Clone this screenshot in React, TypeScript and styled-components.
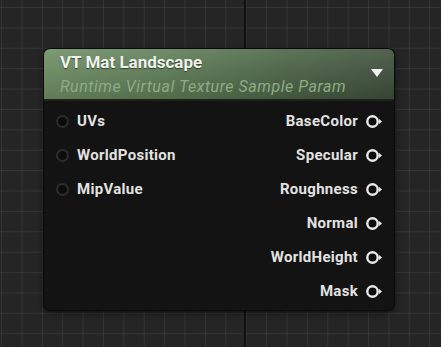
import styled, { createGlobalStyle } from 'styled-components'

const Global = createGlobalStyle`
  html, body {
    margin: 0;
    padding: 0;
    background: #252525;
  }
  #root {
    font-family: Roboto, "Liberation Sans", sans-serif;
  }
`

const Canvas = styled.div`
  position: relative;
  width: 441px;
  height: 347px;
  overflow: hidden;
  box-sizing: border-box;
  padding: 49px 0 0 44px;
  background-color: #252525;
  background-image:
    linear-gradient(to right, transparent 244px, #101010 244px, #101010 246px, transparent 246px),
    linear-gradient(to right, rgba(255, 255, 255, 0.07) 1px, transparent 1px),
    linear-gradient(to bottom, rgba(255, 255, 255, 0.07) 1px, transparent 1px);
  background-size: 441px 347px, 20.4px 20.4px, 20.4px 20.4px;
  background-position: 0 0, 1px 0, 0 7px;
`

const Node = styled.div`
  width: 350px;
  height: 261px;
  border-radius: 6px;
  background: #131313;
  box-shadow: 0 0 0 1px #0a0a0a, 0 2px 6px rgba(0, 0, 0, 0.7);
  overflow: hidden;
  display: flex;
  flex-direction: column;
`

const Header = styled.div`
  position: relative;
  height: 52px;
  box-sizing: border-box;
  padding: 3px 16px 0 16px;
  background:
    linear-gradient(to bottom, rgba(255, 255, 255, 0.1), rgba(0, 0, 0, 0.14)),
    linear-gradient(to right, #6f9066 0%, #5f7e57 35%, #4b6446 70%, #3f503c 100%);
  border-bottom: 2px solid #1c2319;
  display: flex;
  flex-direction: column;
`

const Title = styled.div`
  font-size: 17px;
  font-weight: 700;
  color: #eef2ec;
  line-height: 21px;
  text-shadow: 0 1px 1px rgba(0, 0, 0, 0.5);
`

const Subtitle = styled.div`
  margin-top: 4px;
  font-size: 16px;
  font-style: italic;
  color: #8dac86;
  line-height: 19px;
  letter-spacing: 0.55px;
`

const Caret = styled.svg`
  position: absolute;
  right: 10px;
  top: 19px;
`

const Body = styled.div`
  flex: 1;
  display: grid;
  grid-template-columns: 1fr 1fr;
  padding: 3px 10px 0 10px;
`

const Column = styled.div<{ $right?: boolean }>`
  display: flex;
  flex-direction: column;
  align-items: ${(p) => (p.$right ? 'flex-end' : 'flex-start')};
`

const Pin = styled.div`
  height: 34px;
  display: flex;
  align-items: center;
  gap: 7px;
  font-size: 15px;
  font-weight: 700;
  color: #e2e2e2;
  letter-spacing: 0.3px;
`

const InDot = styled.span`
  width: 9px;
  height: 9px;
  border-radius: 50%;
  border: 2px solid #2c2c2c;
  background: #0c0c0c;
  margin: 0 1px 0 2px;
`

const OutPin = () => (
  <svg width="19" height="15" viewBox="0 0 19 15">
    <circle cx="7.5" cy="7.5" r="5.2" fill="#0c0c0c" stroke="#e8e8e8" strokeWidth="2.4" />
    <path d="M13.8 4.8 L17 7.5 L13.8 10.2 Z" fill="#e8e8e8" />
  </svg>
)

const inputs = ['UVs', 'WorldPosition', 'MipValue']
const outputs = ['BaseColor', 'Specular', 'Roughness', 'Normal', 'WorldHeight', 'Mask']

export default function App() {
  return (
    <>
      <Global />
      <Canvas>
        <Node>
          <Header>
            <Title>VT Mat Landscape</Title>
            <Subtitle>Runtime Virtual Texture Sample Param</Subtitle>
            <Caret width="14" height="10" viewBox="0 0 14 10">
              <path d="M1 1 H13 L7 9 Z" fill="#f2f2f2" />
            </Caret>
          </Header>
          <Body>
            <Column>
              {inputs.map((name) => (
                <Pin key={name}>
                  <InDot />
                  {name}
                </Pin>
              ))}
            </Column>
            <Column $right>
              {outputs.map((name) => (
                <Pin key={name}>
                  {name}
                  <OutPin />
                </Pin>
              ))}
            </Column>
          </Body>
        </Node>
      </Canvas>
    </>
  )
}
